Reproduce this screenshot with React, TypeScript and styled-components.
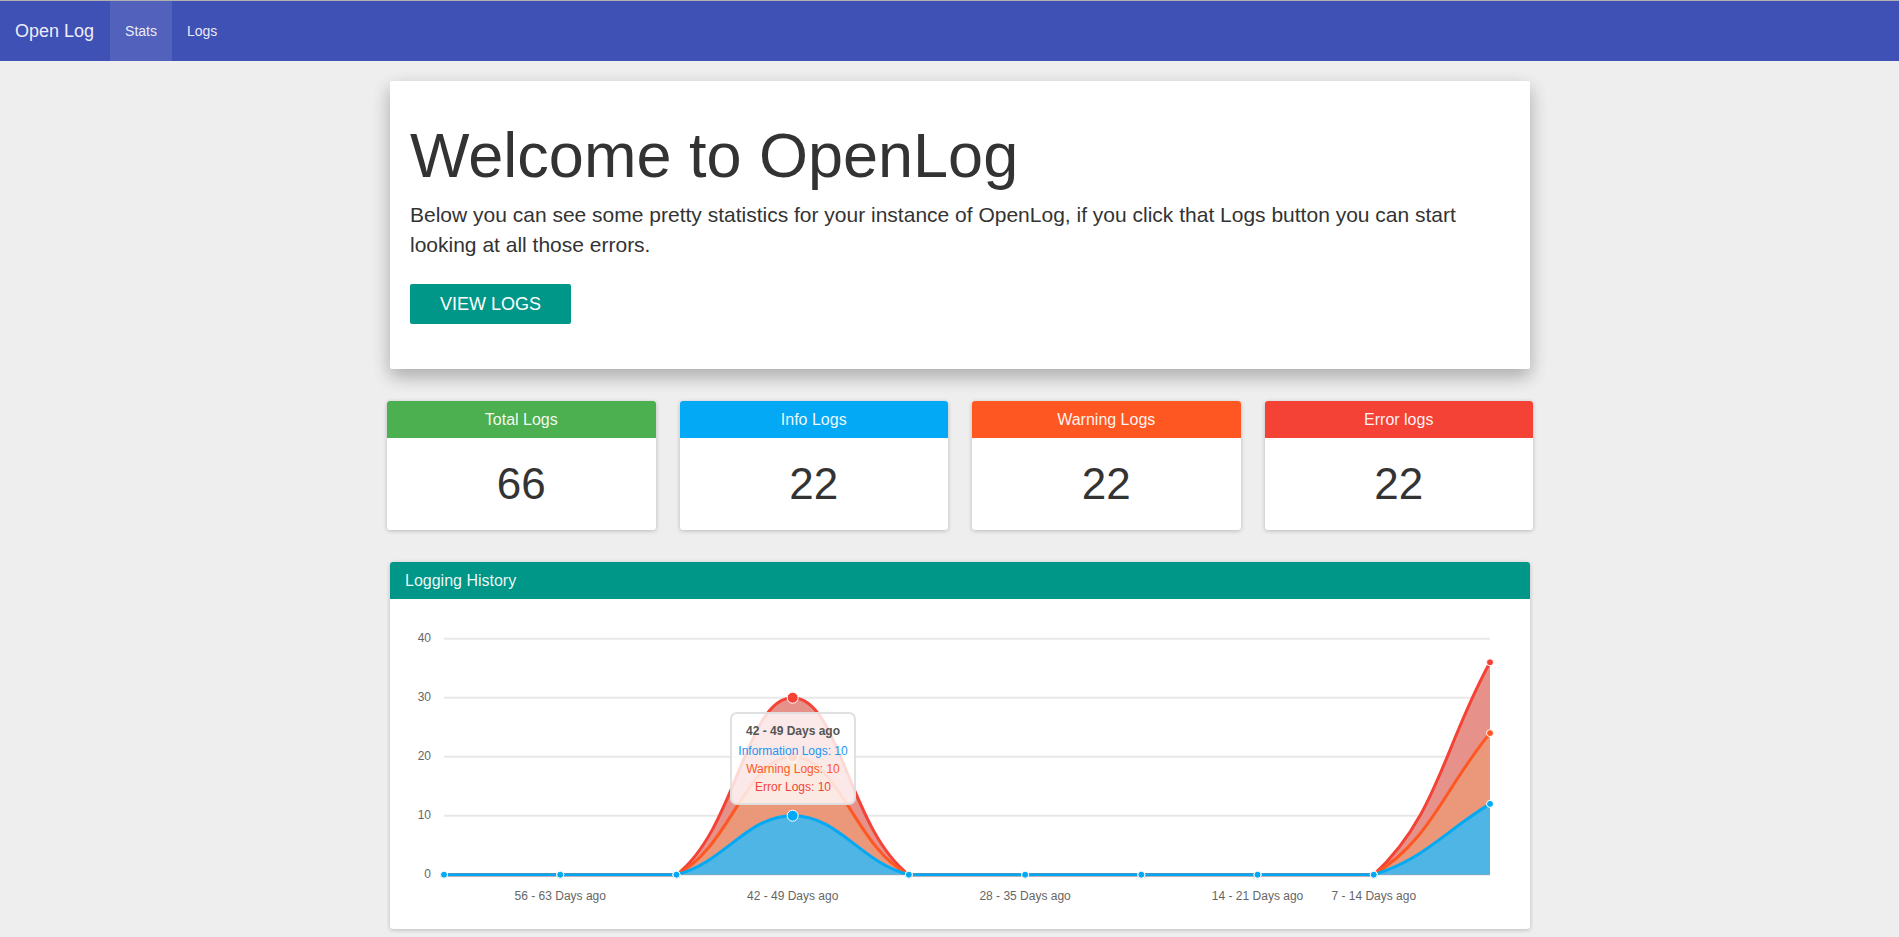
import styled, { createGlobalStyle } from 'styled-components';

const GlobalStyle = createGlobalStyle`
	html, body {
		margin: 0;
		padding: 0;
		background: #eeeeee;
		font-family: 'Liberation Sans', Arial, Helvetica, sans-serif;
		color: #333;
	}
`;

const Navbar = styled.nav`
	display: flex;
	align-items: stretch;
	height: 60px;
	border-top: 1px solid #b0b0b0;
	background: #3f51b5;
`;

const Brand = styled.a`
	display: flex;
	align-items: center;
	padding: 0 16px 0 15px;
	font-size: 18px;
	color: rgba(255, 255, 255, 0.92);
	text-decoration: none;
`;

const NavItem = styled.a<{ $active?: boolean }>`
	display: flex;
	align-items: center;
	padding: 0 15px;
	font-size: 14px;
	color: rgba(255, 255, 255, 0.9);
	background: ${({ $active }) => ($active ? 'rgba(255, 255, 255, 0.1)' : 'transparent')};
	text-decoration: none;
`;

const Page = styled.main`
	padding: 20px 0 40px 21px;
`;

const Container = styled.div`
	width: 1140px;
	margin: 0 auto;
`;

const Jumbotron = styled.section`
	background: #fff;
	border-radius: 2px;
	padding: 40px 20px 45px;
	box-shadow: 0 8px 17px 0 rgba(0, 0, 0, 0.2), 0 6px 20px 0 rgba(0, 0, 0, 0.1);
`;

const Title = styled.h1`
	margin: 0 0 10px;
	font-size: 63px;
	font-weight: 400;
	line-height: 1.1;
	color: #333;
`;

const Lead = styled.p`
	margin: 0 0 24px;
	font-size: 21px;
	line-height: 30px;
	color: #333;
`;

const Button = styled.a`
	display: inline-flex;
	align-items: center;
	height: 40px;
	padding: 0 30px;
	background: #009688;
	color: #fff;
	font-size: 18px;
	border-radius: 2px;
	text-decoration: none;
`;

const StatGrid = styled.div`
	display: grid;
	grid-template-columns: repeat(4, 1fr);
	gap: 24px;
	margin: 32px -3px 0;
`;

const StatCard = styled.div`
	background: #fff;
	border-radius: 3px;
	overflow: hidden;
	box-shadow: 0 1px 4px rgba(0, 0, 0, 0.22);
`;

const StatHeader = styled.div<{ $color: string }>`
	height: 37px;
	display: flex;
	align-items: center;
	justify-content: center;
	background: ${({ $color }) => $color};
	color: rgba(255, 255, 255, 0.95);
	font-size: 16px;
`;

const StatValue = styled.div`
	height: 92px;
	display: flex;
	align-items: center;
	justify-content: center;
	font-size: 44px;
	color: #333;
`;

const Panel = styled.section`
	margin-top: 32px;
	background: #fff;
	border-radius: 3px;
	overflow: hidden;
	box-shadow: 0 1px 4px rgba(0, 0, 0, 0.22);
`;

const PanelHeader = styled.div`
	height: 37px;
	display: flex;
	align-items: center;
	padding: 0 15px;
	background: #009688;
	color: rgba(255, 255, 255, 0.95);
	font-size: 16px;
`;

const ChartBody = styled.div`
	position: relative;
	height: 330px;
`;

const Tooltip = styled.div`
	position: absolute;
	left: 340px;
	top: 113px;
	width: 126px;
	height: 93px;
	box-sizing: border-box;
	padding-top: 8px;
	border: 2px solid rgba(221, 221, 221, 0.9);
	border-radius: 7px;
	background: rgba(255, 255, 255, 0.8);
	text-align: center;
	font-size: 12px;
	line-height: 18px;
`;

const TipTitle = styled.div`
	font-weight: 700;
	color: #555;
	margin-bottom: 2px;
`;

const TipLine = styled.div<{ $color: string }>`
	color: ${({ $color }) => $color};
`;

const stats = [
	{ label: 'Total Logs', value: 66, color: '#4caf50' },
	{ label: 'Info Logs', value: 22, color: '#03a9f4' },
	{ label: 'Warning Logs', value: 22, color: '#ff5722' },
	{ label: 'Error logs', value: 22, color: '#f44336' },
];

const info = [0, 0, 0, 10, 0, 0, 0, 0, 0, 12];
const warning = [0, 0, 0, 10, 0, 0, 0, 0, 0, 12];
const error = [0, 0, 0, 10, 0, 0, 0, 0, 0, 12];

const X0 = 54;
const X1 = 1100;
const Y_ZERO = 275.7;
const Y_UNIT = 5.9;
const STEP = (X1 - X0) / 9;

type Pt = { x: number; y: number };

function toPoints(values: number[]): Pt[] {
	return values.map((v, i) => ({ x: X0 + i * STEP, y: Y_ZERO - v * Y_UNIT }));
}

function splinePath(pts: Pt[], tension = 0.4) {
	const cps = pts.map((cur, i) => {
		const prev = pts[i - 1] || cur;
		const next = pts[i + 1] || cur;
		const d01 = Math.hypot(cur.x - prev.x, cur.y - prev.y);
		const d12 = Math.hypot(next.x - cur.x, next.y - cur.y);
		let s01 = d01 / (d01 + d12);
		let s12 = d12 / (d01 + d12);
		if (isNaN(s01)) s01 = 0;
		if (isNaN(s12)) s12 = 0;
		const fa = tension * s01;
		const fb = tension * s12;
		const clampY = (y: number) => Math.min(Y_ZERO, y);
		return {
			c1: { x: cur.x - fa * (next.x - prev.x), y: clampY(cur.y - fa * (next.y - prev.y)) },
			c2: { x: cur.x + fb * (next.x - prev.x), y: clampY(cur.y + fb * (next.y - prev.y)) },
		};
	});
	let d = `M${pts[0].x},${pts[0].y}`;
	for (let i = 1; i < pts.length; i++) {
		const a = cps[i - 1].c2;
		const b = cps[i].c1;
		d += ` C${a.x},${a.y} ${b.x},${b.y} ${pts[i].x},${pts[i].y}`;
	}
	return d;
}

const series = [
	{ pts: toPoints(info.map((v, i) => v + warning[i] + error[i])), line: '#f44336', fill: '#e6928a' },
	{ pts: toPoints(info.map((v, i) => v + warning[i])), line: '#ff5722', fill: '#eb977a' },
	{ pts: toPoints(info), line: '#03a9f4', fill: '#4fb5e4' },
];

const xLabels = [
	{ i: 1, text: '56 - 63 Days ago' },
	{ i: 3, text: '42 - 49 Days ago' },
	{ i: 5, text: '28 - 35 Days ago' },
	{ i: 7, text: '14 - 21 Days ago' },
	{ i: 8, text: '7 - 14 Days ago' },
];

function HistoryChart() {
	return (
		<svg width="1140" height="330" style={{ display: 'block' }}>
			{[40, 30, 20, 10, 0].map((v) => {
				const y = Y_ZERO - v * Y_UNIT;
				return (
					<g key={v}>
						<line x1={X0} x2={X1} y1={y} y2={y} stroke="#e8e8e8" strokeWidth="2" />
						<text x={41} y={y + 0.5} textAnchor="end" dominantBaseline="middle" fontSize="12" fill="#666" fontFamily="'Liberation Sans', Arial, sans-serif">
							{v}
						</text>
					</g>
				);
			})}
			{xLabels.map((l) => (
				<text key={l.text} x={X0 + l.i * STEP} y={298} textAnchor="middle" dominantBaseline="middle" fontSize="12" fill="#666" fontFamily="'Liberation Sans', Arial, sans-serif">
					{l.text}
				</text>
			))}
			{series.map((s) => {
				const line = splinePath(s.pts);
				const area = `${line} L${X1},${Y_ZERO} L${X0},${Y_ZERO} Z`;
				return (
					<g key={s.line}>
						<path d={area} fill={s.fill} />
						<path d={line} fill="none" stroke={s.line} strokeWidth="3" />
					</g>
				);
			})}
			{series.map((s) =>
				s.pts.map((p, i) => (
					<circle key={`${s.line}-${i}`} cx={p.x} cy={p.y} r={i === 3 ? 5.5 : 3.5} fill={s.line} stroke="#fff" strokeWidth="1" />
				)),
			)}
		</svg>
	);
}

export default function App() {
	return (
		<>
			<GlobalStyle />
			<Navbar>
				<Brand href="#">Open Log</Brand>
				<NavItem href="#" $active>
					Stats
				</NavItem>
				<NavItem href="#">Logs</NavItem>
			</Navbar>
			<Page>
				<Container>
					<Jumbotron>
						<Title>Welcome to OpenLog</Title>
						<Lead>
							Below you can see some pretty statistics for your instance of OpenLog, if you click that Logs button you can start looking at all
							those errors.
						</Lead>
						<Button href="#">VIEW LOGS</Button>
					</Jumbotron>
					<StatGrid>
						{stats.map((s) => (
							<StatCard key={s.label}>
								<StatHeader $color={s.color}>{s.label}</StatHeader>
								<StatValue>{s.value}</StatValue>
							</StatCard>
						))}
					</StatGrid>
					<Panel>
						<PanelHeader>Logging History</PanelHeader>
						<ChartBody>
							<HistoryChart />
							<Tooltip>
								<TipTitle>42 - 49 Days ago</TipTitle>
								<TipLine $color="#2196f3">Information Logs: 10</TipLine>
								<TipLine $color="#ff5722">Warning Logs: 10</TipLine>
								<TipLine $color="#f44336">Error Logs: 10</TipLine>
							</Tooltip>
						</ChartBody>
					</Panel>
				</Container>
			</Page>
		</>
	);
}
